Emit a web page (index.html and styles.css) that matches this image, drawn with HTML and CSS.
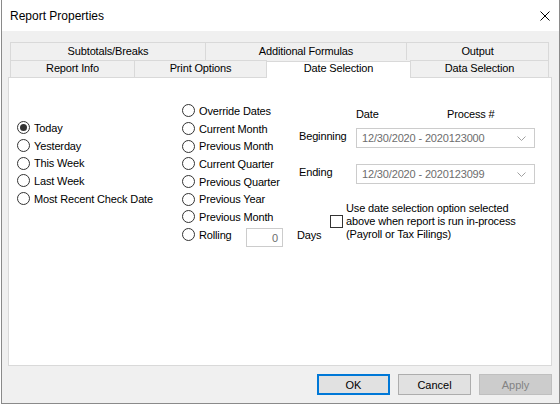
FILE: index.html
```html
<!DOCTYPE html>
<html lang="en">
<head>
    <meta charset="UTF-8">
    <title>Report Properties</title>
    <link rel="stylesheet" href="styles.css">
</head>
<body>
    <div class="janela">
        <div class="barra-titulo">
            <span class="titulo">Report Properties</span>
            <svg class="fechar" width="10" height="10" viewBox="0 0 10 10">
                <path d="M0.5 0.5 L9.5 9.5 M9.5 0.5 L0.5 9.5" stroke="#000" stroke-width="1" fill="none"/>
            </svg>
        </div>

        <div class="cliente">
            <div class="abas">
                <div class="linha-abas">
                    <div class="aba aba-subtotais">Subtotals/Breaks</div>
                    <div class="aba aba-formulas">Additional Formulas</div>
                    <div class="aba aba-saida">Output</div>
                </div>
                <div class="linha-abas">
                    <div class="aba aba-info">Report Info</div>
                    <div class="aba aba-impressao">Print Options</div>
                    <div class="aba aba-datas aba-selecionada">Date Selection</div>
                    <div class="aba aba-dados">Data Selection</div>
                </div>
            </div>

            <div class="pagina">
                <div class="coluna coluna-1">
                    <div class="opcao"><span class="radio marcado"></span>Today</div>
                    <div class="opcao"><span class="radio"></span>Yesterday</div>
                    <div class="opcao"><span class="radio"></span>This Week</div>
                    <div class="opcao"><span class="radio"></span>Last Week</div>
                    <div class="opcao"><span class="radio"></span>Most Recent Check Date</div>
                </div>

                <div class="coluna coluna-2">
                    <div class="opcao"><span class="radio"></span>Override Dates</div>
                    <div class="opcao"><span class="radio"></span>Current Month</div>
                    <div class="opcao"><span class="radio"></span>Previous Month</div>
                    <div class="opcao"><span class="radio"></span>Current Quarter</div>
                    <div class="opcao"><span class="radio"></span>Previous Quarter</div>
                    <div class="opcao"><span class="radio"></span>Previous Year</div>
                    <div class="opcao"><span class="radio"></span>Previous Month</div>
                    <div class="opcao"><span class="radio"></span><span class="rotulo-rolling">Rolling</span><span class="campo-dias">0</span></div>
                </div>

                <div class="coluna coluna-3">
                    <div class="cabecalho">
                        <span class="cab-data">Date</span>
                        <span>Process #</span>
                    </div>
                    <div class="linha-combo">
                        <span class="rotulo">Beginning</span>
                        <div class="combo">
                            <span>12/30/2020 - 2020123000</span>
                            <svg width="9" height="5" viewBox="0 0 9 5"><path d="M0.5 0.5 L4.5 4.5 L8.5 0.5" stroke="#a0a0a0" fill="none"/></svg>
                        </div>
                    </div>
                    <div class="linha-combo linha-fim">
                        <span class="rotulo">Ending</span>
                        <div class="combo">
                            <span>12/30/2020 - 2020123099</span>
                            <svg width="9" height="5" viewBox="0 0 9 5"><path d="M0.5 0.5 L4.5 4.5 L8.5 0.5" stroke="#a0a0a0" fill="none"/></svg>
                        </div>
                    </div>
                    <div class="linha-dias">
                        <span class="rotulo-dias">Days</span>
                        <span class="caixa"></span>
                        <span class="texto-caixa">Use date selection option selected<br>above when report is run in-process<br>(Payroll or Tax Filings)</span>
                    </div>
                </div>
            </div>

            <div class="botoes">
                <button class="botao botao-padrao">OK</button>
                <button class="botao">Cancel</button>
                <button class="botao botao-desativado">Apply</button>
            </div>
        </div>
    </div>
</body>
</html>
```

FILE: styles.css
```css
html, body {
    margin: 0;
    padding: 0;
    background-color: #fff;
}
body {
    font-family: "Liberation Sans", Arial, sans-serif;
    font-size: 11px;
    letter-spacing: -0.15px;
    color: #000;
}
.janela {
    box-sizing: border-box;
    margin-left: 1px;
    width: 559px;
    height: 404px;
    border: 1px solid #8a8a8a;
    border-top: none;
    background-color: #f0f0f0;
    display: flex;
    flex-direction: column;
}
.barra-titulo {
    height: 31px;
    background-color: #fff;
    display: flex;
    align-items: center;
    justify-content: space-between;
    padding: 0 9px 0 8px;
    flex-shrink: 0;
}
.titulo {
    font-size: 12px;
    letter-spacing: 0;
    margin-top: 1px;
}
.fechar {
    margin-top: 1px;
}
.cliente {
    padding: 11px 7px 0 6px;
}
.abas {
    padding-left: 2px;
    padding-right: 3px;
}
.linha-abas {
    display: flex;
    align-items: flex-end;
}
.aba {
    box-sizing: border-box;
    height: 18px;
    border: 1px solid #d9d9d9;
    border-bottom: none;
    background-color: #f0f0f0;
    display: flex;
    align-items: center;
    justify-content: center;
    padding-bottom: 2px;
}
.linha-abas + .linha-abas .aba {
    height: 17px;
}
.aba + .aba {
    margin-left: -1px;
}
.aba-subtotais { width: 196px; }
.aba-formulas { width: 202px; }
.aba-saida { width: 143px; }
.aba-info { width: 125px; }
.aba-impressao { width: 133px; }
.aba-datas { width: 145px; }
.aba-dados { width: 139px; }
.linha-abas .aba-selecionada {
    position: relative;
    z-index: 1;
    height: 21px;
    margin-top: -3px;
    margin-bottom: -1px;
    background-color: #fff;
    align-items: flex-start;
    padding-top: 0;
    padding-bottom: 0;
}
.pagina {
    box-sizing: border-box;
    height: 289px;
    border: 1px solid #d9d9d9;
    background-color: #fff;
    display: flex;
    align-items: flex-start;
}
.coluna-1 {
    margin-left: 8px;
    margin-top: 41px;
    width: 165px;
}
.coluna-2 {
    margin-top: 24px;
    width: 115px;
}
.coluna-3 {
    margin-top: 29px;
    display: flex;
    flex-direction: column;
}
.opcao {
    height: 17.7px;
    display: flex;
    align-items: center;
    white-space: nowrap;
}
.radio {
    box-sizing: border-box;
    width: 13px;
    height: 13px;
    border: 1px solid #333;
    border-radius: 50%;
    background-color: #fff;
    margin-right: 4px;
    flex-shrink: 0;
    display: flex;
    align-items: center;
    justify-content: center;
}
.radio.marcado::after {
    content: "";
    width: 7px;
    height: 7px;
    border-radius: 50%;
    background-color: #333;
}
.rotulo-rolling {
    width: 47px;
}
.campo-dias {
    box-sizing: border-box;
    width: 37px;
    height: 19px;
    margin-top: 5px;
    border: 1px solid #ccc;
    color: #6d6d6d;
    text-align: right;
    padding: 3px 4px 0 0;
}
.cabecalho {
    height: 14px;
    line-height: 14px;
    padding-left: 59px;
    display: flex;
}
.cab-data {
    width: 91px;
}
.linha-combo {
    display: flex;
    align-items: flex-start;
    margin-top: 7px;
}
.linha-fim {
    margin-top: 16px;
}
.rotulo {
    width: 57px;
    padding-left: 2px;
    margin-top: 2px;
}
.combo {
    box-sizing: border-box;
    width: 179px;
    height: 20px;
    border: 1px solid #ccc;
    background-color: #fff;
    color: #6d6d6d;
    display: flex;
    align-items: center;
    justify-content: space-between;
    padding: 0 8px 0 5px;
}
.linha-dias {
    display: flex;
    align-items: center;
    margin-top: 18px;
}
.rotulo-dias {
    width: 33px;
    align-self: flex-end;
    line-height: 13px;
    margin-bottom: -1px;
}
.caixa {
    box-sizing: border-box;
    width: 13px;
    height: 13px;
    border: 1px solid #333;
    background-color: #fff;
    margin-right: 3px;
}
.texto-caixa {
    line-height: 13px;
}
.botoes {
    display: flex;
    justify-content: flex-end;
    gap: 8px;
    margin-top: 8px;
}
.botao {
    box-sizing: border-box;
    width: 73px;
    height: 21px;
    border: 1px solid #adadad;
    background-color: #e1e1e1;
    font-family: "Liberation Sans", Arial, sans-serif;
    font-size: 11px;
    color: #000;
    padding: 0;
}
.botao-padrao {
    border: 2px solid #0078d7;
}
.botao-desativado {
    background-color: #cccccc;
    border-color: #bfbfbf;
    color: #838383;
}
```
